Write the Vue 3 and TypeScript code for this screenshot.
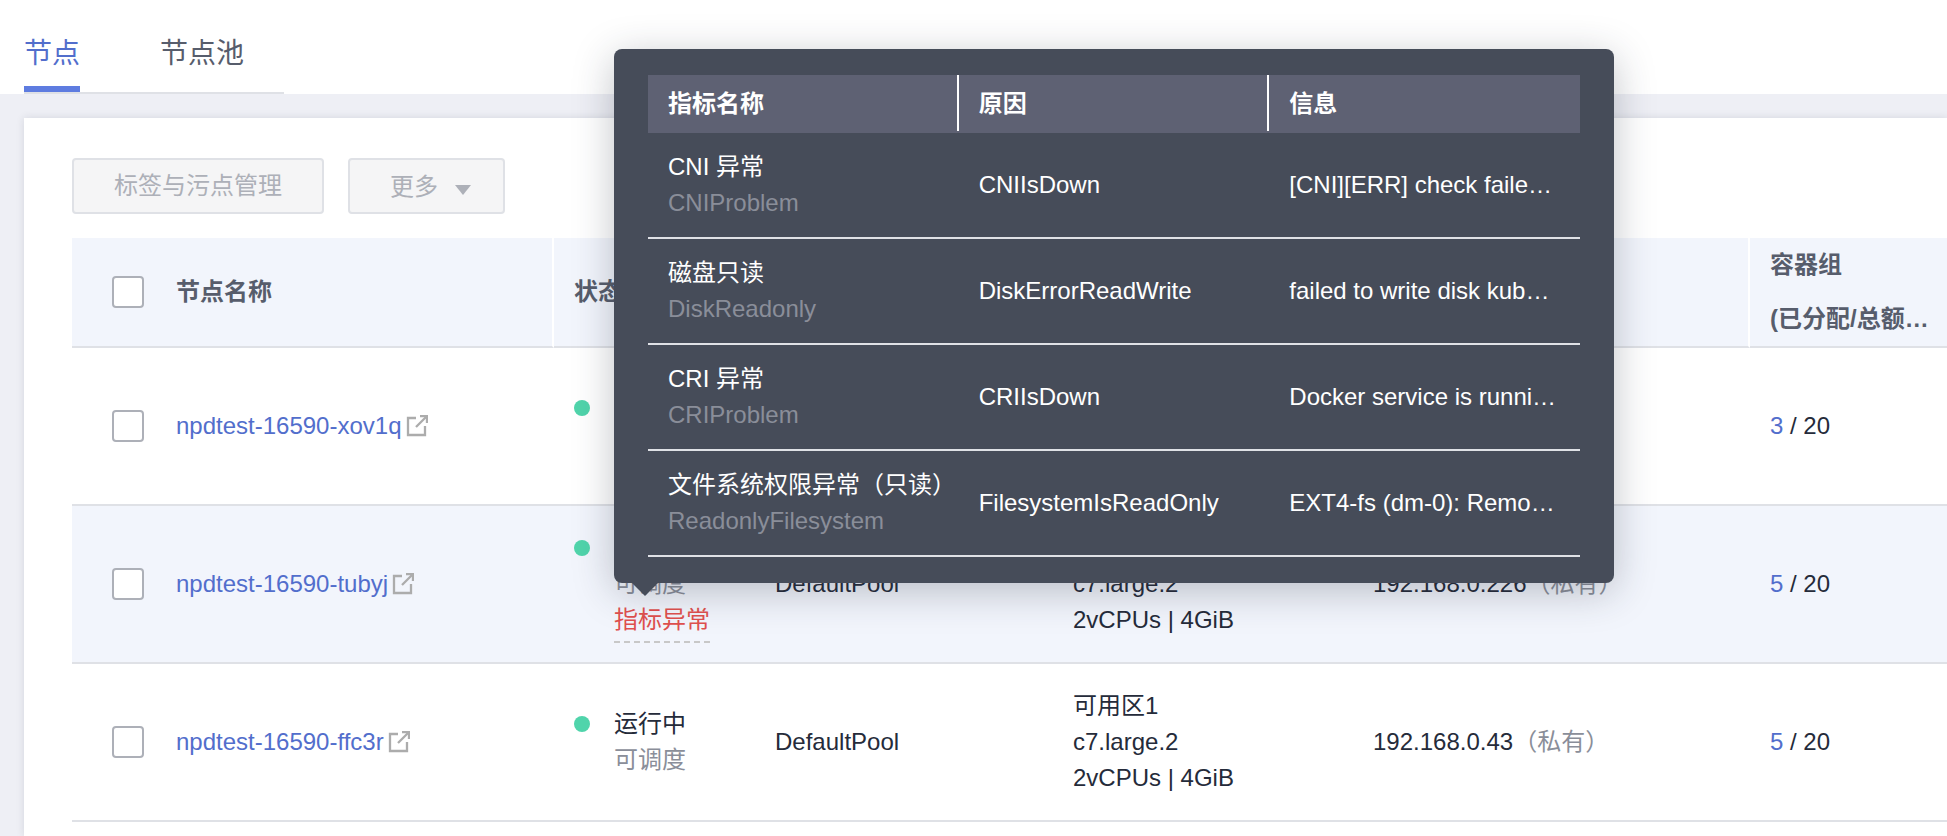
<script setup lang="ts">
import { ref } from 'vue'

interface NodeRow {
  name: string
  alert?: string
  pool?: string
  spec?: string[]
  ip?: string
  used: number
  total: number
}

interface Problem {
  title: string
  code: string
  reason: string
  message: string
}

const tabs = ['节点', '节点池']
const activeTab = ref('节点')

const nodes: NodeRow[] = [
  { name: 'npdtest-16590-xov1q', used: 3, total: 20 },
  {
    name: 'npdtest-16590-tubyj',
    alert: '指标异常',
    pool: 'DefaultPool',
    spec: ['可用区1', 'c7.large.2', '2vCPUs | 4GiB'],
    ip: '192.168.0.226',
    used: 5,
    total: 20,
  },
  {
    name: 'npdtest-16590-ffc3r',
    pool: 'DefaultPool',
    spec: ['可用区1', 'c7.large.2', '2vCPUs | 4GiB'],
    ip: '192.168.0.43',
    used: 5,
    total: 20,
  },
]

const problems: Problem[] = [
  { title: 'CNI 异常', code: 'CNIProblem', reason: 'CNIIsDown', message: '[CNI][ERR] check faile…' },
  { title: '磁盘只读', code: 'DiskReadonly', reason: 'DiskErrorReadWrite', message: 'failed to write disk kub…' },
  { title: 'CRI 异常', code: 'CRIProblem', reason: 'CRIIsDown', message: 'Docker service is runni…' },
  { title: '文件系统权限异常（只读）', code: 'ReadonlyFilesystem', reason: 'FilesystemIsReadOnly', message: 'EXT4-fs (dm-0): Remo…' },
]
</script>

<template>
  <div class="page">
    <header class="top">
      <nav class="tabs">
        <button
          v-for="tab in tabs"
          :key="tab"
          type="button"
          class="tab"
          :class="{ active: tab === activeTab }"
          @click="activeTab = tab"
        >{{ tab }}</button>
      </nav>
    </header>

    <main class="panel">
      <div class="toolbar">
        <button type="button" class="btn" disabled>标签与污点管理</button>
        <button type="button" class="btn more" disabled>
          更多
          <svg class="caret" viewBox="0 0 16 10" aria-hidden="true"><path d="M0 0h16L8 10z" /></svg>
        </button>
      </div>

      <table class="grid">
        <colgroup>
          <col class="c-check" />
          <col class="c-name" />
          <col class="c-status" />
          <col class="c-pool" />
          <col class="c-spec" />
          <col />
          <col class="c-pods" />
        </colgroup>
        <thead>
          <tr>
            <th class="check"><input type="checkbox" class="box" aria-labelledby="col-name" /></th>
            <th id="col-name" class="split">节点名称</th>
            <th class="split">状态</th>
            <th class="split"></th>
            <th class="split"></th>
            <th class="split"></th>
            <th class="pods">
              <div>容器组</div>
              <div>(已分配/总额…</div>
            </th>
          </tr>
        </thead>
        <tbody>
          <tr v-for="node in nodes" :key="node.name" :class="{ hover: node.alert }">
            <td class="check">
              <input type="checkbox" class="box" :aria-labelledby="node.name" />
            </td>
            <td>
              <a :id="node.name" href="#" class="link name">{{ node.name }}<svg class="ext" viewBox="0 0 22 22" aria-hidden="true">
                  <path d="M10 3H2v17h17v-9" />
                  <path d="M10 12 20 2" />
                  <path d="M14 1h7v7" />
                </svg></a>
            </td>
            <td>
              <div class="status">
                <i class="dot"></i>
                <div>
                  <div>运行中</div>
                  <div class="muted">可调度</div>
                  <div v-if="node.alert" class="anchor">
                    <a href="#" class="alert">{{ node.alert }}</a>
                    <div class="tip" role="tooltip">
                      <table class="tip-table">
                        <thead>
                          <tr>
                            <th>指标名称</th>
                            <th>原因</th>
                            <th>信息</th>
                          </tr>
                        </thead>
                        <tbody>
                          <tr v-for="p in problems" :key="p.code">
                            <td>
                              <div>{{ p.title }}</div>
                              <div class="code">{{ p.code }}</div>
                            </td>
                            <td>{{ p.reason }}</td>
                            <td>{{ p.message }}</td>
                          </tr>
                        </tbody>
                      </table>
                    </div>
                  </div>
                </div>
              </div>
            </td>
            <td>{{ node.pool }}</td>
            <td><div v-for="line in node.spec" :key="line">{{ line }}</div></td>
            <td><template v-if="node.ip">{{ node.ip }}<span class="muted">（私有）</span></template></td>
            <td><a href="#" class="link">{{ node.used }}</a> / {{ node.total }}</td>
          </tr>
        </tbody>
      </table>
    </main>
  </div>
</template>

<style>
body {
  margin: 0;
  background: #eeeff5;
}
</style>

<style scoped>
.page {
  min-height: 100vh;
  overflow: hidden;
  display: flex;
  flex-direction: column;
  box-sizing: border-box;
  color: #252b3a;
  font: 24px/36px "Liberation Sans", "Noto Sans CJK SC", sans-serif;
}

.top {
  background: #fff;
  padding-left: 24px;
}

.tabs {
  display: inline-flex;
  gap: 80px;
  padding: 32px 40px 0 0;
  border-bottom: 2px solid #dfe1e6;
  vertical-align: top;
}

.tab {
  height: 60px;
  padding: 0 0 10px;
  border: 0;
  border-bottom: 6px solid transparent;
  background: none;
  color: #575d6c;
  font: inherit;
  font-size: 28px;
  cursor: pointer;
}

.tab.active {
  color: #526ecc;
  border-bottom-color: #5e7ce0;
}

.panel {
  flex: 1;
  margin: 24px 0 0 24px;
  padding: 40px 0 0 48px;
  background: #fff;
  box-shadow: 0 0 8px rgba(37, 43, 58, 0.12);
}

.toolbar {
  display: flex;
  gap: 24px;
  margin-bottom: 24px;
}

.btn {
  display: flex;
  align-items: center;
  height: 56px;
  padding: 0 40px;
  border: 2px solid #dfe1e6;
  border-radius: 4px;
  background: #f5f5f6;
  color: #adb0b8;
  font: inherit;
}

.more {
  gap: 17px;
  padding: 2px 32px 0 40px;
}

.caret {
  width: 16px;
  height: 10px;
  margin-top: 6px;
  fill: #adb0b8;
}

.grid {
  width: 100%;
  table-layout: fixed;
  border-collapse: separate;
  border-spacing: 0;
}

.c-check { width: 84px; }
.c-name { width: 398px; }
.c-status { width: 201px; }
.c-pool { width: 298px; }
.c-spec { width: 300px; }
.c-pods { width: 197px; }

.grid > thead > tr > th {
  height: 108px;
  padding: 0 16px 0 20px;
  border-bottom: 2px solid #dfe1e6;
  background: #f2f5fc;
  color: #575d6c;
  text-align: left;
  white-space: nowrap;
}

.grid > thead > tr > th.split {
  border-right: 2px solid #fff;
}

.grid > thead > tr > th.pods {
  line-height: 54px;
}

.grid > tbody > tr > td {
  height: 156px;
  padding: 0 0 0 20px;
  border-bottom: 2px solid #dfe1e6;
  white-space: nowrap;
}

.grid > tbody > tr.hover > td {
  background: #f2f5fc;
}

.grid > thead > tr > th.check,
.grid > tbody > tr > td.check {
  padding: 0 12px 0 40px;
}

.box {
  appearance: none;
  display: block;
  width: 32px;
  height: 32px;
  margin: 0;
  border: 2px solid #adb0b8;
  border-radius: 4px;
  background: #fff;
}

.link {
  color: #526ecc;
  text-decoration: none;
}

.name {
  display: inline-flex;
  align-items: center;
  gap: 4px;
}

.ext {
  width: 22px;
  height: 22px;
  fill: none;
  stroke: #acacac;
  stroke-width: 2.3;
}

.status {
  display: flex;
  gap: 24px;
}

.dot {
  width: 16px;
  height: 16px;
  margin-top: 10px;
  border-radius: 50%;
  background: #50d4ab;
}

.muted {
  color: #8a8e99;
}

.anchor {
  position: relative;
  height: 36px;
}

.alert {
  display: inline-block;
  height: 41px;
  background: repeating-linear-gradient(90deg, #c8c8c8 0 6px, transparent 6px 10px) left bottom / 100% 2px no-repeat;
  color: #e0504e;
  text-decoration: none;
}

.tip {
  position: absolute;
  z-index: 10;
  left: 0;
  bottom: 55px;
  width: 1000px;
  box-sizing: border-box;
  padding: 26px 34px;
  border-radius: 8px;
  background: #464c59;
  color: #fff;
  box-shadow: 0 8px 40px rgba(37, 43, 58, 0.28);
}

.tip::after {
  content: "";
  position: absolute;
  top: 100%;
  left: 18px;
  border: 13px solid transparent;
  border-top-color: #464c59;
  border-bottom: 0;
}

.tip-table {
  width: 100%;
  table-layout: fixed;
  border-spacing: 0;
}

.tip-table th {
  height: 58px;
  padding: 0 0 0 20px;
  background:
    linear-gradient(#fff, #fff) right top / 2px 56px no-repeat,
    #5e6173;
  text-align: left;
}

.tip-table th:last-child {
  background: #5e6173;
}

.tip-table td {
  height: 104px;
  padding: 0 0 0 20px;
  border-bottom: 2px solid #dfe1e6;
}

.code {
  color: #8a8e99;
}
</style>
